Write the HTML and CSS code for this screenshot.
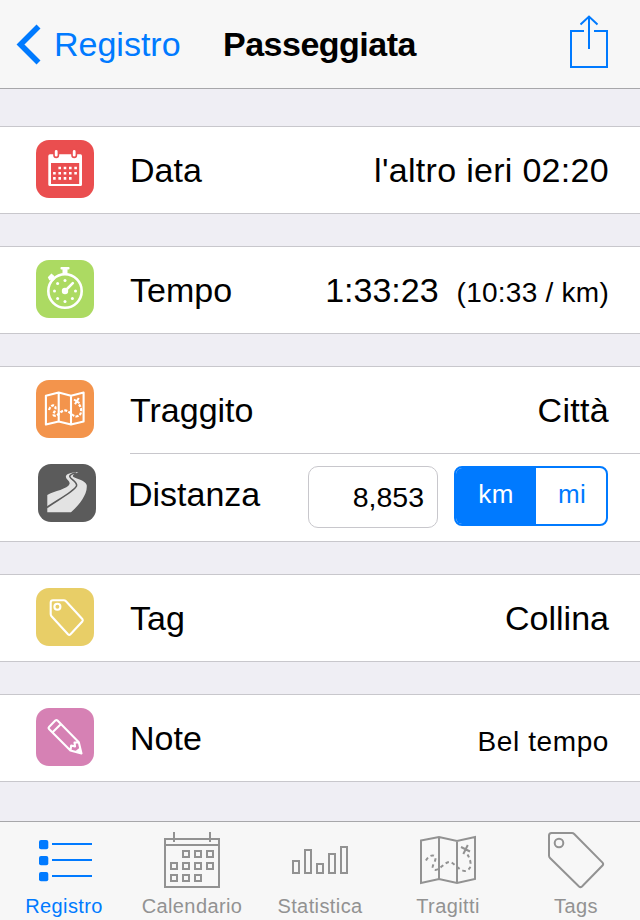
FILE: index.html
```
<!DOCTYPE html>
<html lang="it">
<head>
    <meta charset="UTF-8">
    <meta name="viewport" content="width=device-width, initial-scale=1.0">
    <title>Passeggiata</title>
    <link rel="stylesheet" href="styles.css">
</head>
<body>
    <header class="navbar">
        <a class="back" href="#">
            <svg class="chevron" viewBox="0 0 26 42"><path d="M22.500 3.500 L4.500 21.500 L22.500 39.500"/></svg>
            <span>Registro</span>
        </a>
        <h1>Passeggiata</h1>
        <a class="share" href="#">
            <svg viewBox="0 0 40 54"><path d="M15 16H2V52H38V16H25M20 34V2M11.500 9.500L20 1.500L28.500 9.500"/></svg>
        </a>
    </header>

    <main>
        <section class="group">
            <div class="row">
                <div class="tile red">
                    <svg viewBox="0 0 58 58">
                        <path class="solid" fill-rule="evenodd" d="M14 14.300H44.500Q46 14.300 46 16V44.500Q46 46 44.500 46H14Q12.300 46 12.300 44.500V16Q12.300 14.300 14 14.300ZM15 23V44H43.200V23Z"/>
                        <rect class="ring" x="18" y="9.200" width="4.400" height="8.200" rx="2.200"/>
                        <rect class="ring" x="36" y="9.200" width="4.400" height="8.200" rx="2.200"/>
                        <path class="dots" d="M22.400 28h18.800M17.100 33.200h24M17.100 38.400h18.700"/>
                    </svg>
                </div>
                <span class="label">Data</span>
                <span class="value wide">l'altro ieri 02:20</span>
            </div>
        </section>

        <section class="group">
            <div class="row">
                <div class="tile green">
                    <svg viewBox="0 0 58 58">
                        <circle class="line" cx="29" cy="31" r="16.700"/>
                        <path class="solid" d="M25.300 7h7.400q.8 0 .8.800v1q0 .8-.8.800h-1.200v5h-5v-5h-1.200q-.8 0-.8-.8v-1q0-.8.800-.8z"/>
                        <path class="solid" d="M11.800 17.200l3.600-3.600 3.200 2.700-1 1.500 1.300 1.300-2.300 2.300-1.700-1.700-1.500.7z"/>
                        <path class="hand" d="M29 31L36.800 23.200"/>
                        <circle class="solid" cx="29" cy="31" r="3.200"/>
                        <g class="solid">
                            <circle cx="29" cy="20.500" r="1.500"/>
                            <circle cx="39.500" cy="31" r="1.500"/>
                            <circle cx="29" cy="41.500" r="1.500"/>
                            <circle cx="18.500" cy="31" r="1.500"/>
                            <circle cx="21.600" cy="23.600" r="1.500"/>
                            <circle cx="21.600" cy="38.400" r="1.500"/>
                            <circle cx="36.400" cy="38.400" r="1.500"/>
                        </g>
                    </svg>
                </div>
                <span class="label">Tempo</span>
                <span class="value">1:33:23</span>
                <span class="pace">(10:33 / km)</span>
            </div>
        </section>

        <section class="group">
            <div class="row">
                <div class="tile orange">
                    <svg viewBox="0 0 58 58">
                        <path class="line thin" d="M9.900 15.700L22.700 12.600L35 15.700L47.600 12.600V41.600L35 44.600L22.700 41.600L9.900 44.600ZM22.700 12.600V41.600M35 15.700V44.600"/>
                        <path class="line dashed" d="M13 30C15 24 20 24 19.500 29C19 32 16 34 18 35.500C21 37 24 31 28.500 30.500C33 30 36 36 40 36.500C46 36 46.500 29 43 24.500"/>
                        <path class="line thin" d="M38 19.500L43.500 23.200M42.800 18L39 24.200"/>
                    </svg>
                </div>
                <span class="label">Traggito</span>
                <span class="value wide">Città</span>
            </div>
            <div class="row distance">
                <div class="tile gray">
                    <svg viewBox="0 0 58 58">
                        <path class="asphalt" d="M9.300 31C16 27 30 25 31.500 20C32.500 17 27 15 28 12C29 9.500 34 8.500 40.500 8.300C36 10 33.500 11.500 35.500 13C39 15 47.500 16.500 48.700 21C50 31 39 43 33 48.300H9.300Z"/>
                        <path class="lane" d="M9 43.500C17 37.500 36 27.500 38.500 22C40 17.500 31 15 31.800 12C32.300 10.300 35 9.500 38 9"/>
                    </svg>
                </div>
                <span class="label">Distanza</span>
                <span class="field">8,853</span>
                <div class="segmented">
                    <span class="segment active">km</span>
                    <span class="segment">mi</span>
                </div>
            </div>
        </section>

        <section class="group">
            <div class="row">
                <div class="tile yellow">
                    <svg viewBox="0 0 58 58">
                        <path class="line thin" d="M17 12.300H27.800Q29 12.300 30 13.300L46.300 31Q47.300 32.300 46.300 33.500L34.500 46.300Q33.300 47.500 32 46.300L15.500 28.300Q14.700 27.300 14.700 26V14.600Q14.700 12.300 17 12.300Z"/>
                        <circle class="line thin" cx="21.400" cy="18.700" r="3"/>
                    </svg>
                </div>
                <span class="label">Tag</span>
                <span class="value">Collina</span>
            </div>
        </section>

        <section class="group">
            <div class="row">
                <div class="tile pink">
                    <svg viewBox="0 0 58 58">
                        <path class="line thin" d="M19.300 12.600Q20.500 11.600 21.500 12.600L42.800 34.300L45.500 45.500L34.400 42.500L13 21Q12 20 13 19ZM16.600 24.300L25 16M34.400 42.500L35.200 37.500L39 38.500L38.500 34.500L42.800 34.300"/>
                        <path class="solid" d="M39.500 43L44 39.500L46 46Z"/>
                    </svg>
                </div>
                <span class="label">Note</span>
                <span class="value small">Bel tempo</span>
            </div>
        </section>
    </main>

    <nav class="tabbar">
        <a class="tab active" href="#">
            <svg viewBox="0 0 60 60">
                <g class="bullets">
                    <rect x="5" y="10" width="9.300" height="9.300" rx="2"/>
                    <rect x="5" y="26" width="9.300" height="9.300" rx="2"/>
                    <rect x="5" y="42" width="9.300" height="9.300" rx="2"/>
                </g>
                <path d="M18 14H58M18 30H58M18 46H58"/>
            </svg>
            <span>Registro</span>
        </a>
        <a class="tab" href="#">
            <svg viewBox="0 0 60 60">
                <path d="M3 9H57V57H3ZM3 15H57M12 2V12M48 2V12"/>
                <path d="M21 21h6v6h-6zM33 21h6v6h-6zM45 21h6v6h-6zM9 33h6v6h-6zM21 33h6v6h-6zM33 33h6v6h-6zM45 33h6v6h-6zM9 45h6v6h-6zM21 45h6v6h-6zM33 45h6v6h-6z"/>
            </svg>
            <span>Calendario</span>
        </a>
        <a class="tab" href="#">
            <svg viewBox="0 0 60 60">
                <path d="M3 31h6v12h-6zM15 20h6v23h-6zM27 34h6v9h-6zM39 24h6v19h-6zM51 17h6v26h-6z"/>
            </svg>
            <span>Statistica</span>
        </a>
        <a class="tab" href="#">
            <svg viewBox="0 0 60 60">
                <path d="M3 10.500L21 7L39 11L57 7V49L39 53L21 49L3 53ZM21 7V49M39 11V53"/>
                <path class="trail" d="M8 30.500C10 26 16 23 17.500 28C18 32 12 37 16 39.500C21 42 26 32 31.500 32C36 32 41 41 47 41C54 40 54 32 49.500 24.500"/>
                <path d="M43 17L52 21.500M49.800 15L45.300 24"/>
            </svg>
            <span>Tragitti</span>
        </a>
        <a class="tab" href="#">
            <svg viewBox="0 0 60 60">
                <path d="M5.500 3H26Q27.200 3 28.200 4L56.500 32.600Q57.800 34 56.500 35.500L36 56.500Q34.500 57.700 33 56.500L4 28Q3 27 3 25.500V5.500Q3 3 5.500 3Z"/>
                <circle cx="13" cy="13" r="4.300"/>
            </svg>
            <span>Tags</span>
        </a>
    </nav>
</body>
</html>
```
FILE: styles.css
```
* {
    margin: 0;
    padding: 0;
    box-sizing: border-box;
}

body {
    height: 920px;
    display: flex;
    flex-direction: column;
    background: #efeef4;
    color: #000;
    font-family: 'Liberation Sans', Helvetica, Arial, sans-serif;
    font-size: 34px;
    overflow: hidden;
}

a {
    color: #007aff;
    text-decoration: none;
}

svg {
    display: block;
    fill: none;
}

/* top bar */
.navbar {
    height: 89px;
    display: flex;
    align-items: center;
    padding: 0 31px 0 16px;
    background: #f7f7f7;
    border-bottom: 1px solid #a7a7aa;
}

.back {
    display: flex;
    align-items: center;
    width: 207px;
}

.chevron {
    width: 26px;
    height: 42px;
    margin-right: 12px;
    stroke: #007aff;
    stroke-width: 5.6;
}

.navbar h1 {
    font-size: 34px;
    font-weight: bold;
    letter-spacing: -0.5px;
}

.share {
    margin-left: auto;
    padding-bottom: 4px;
}

.share svg {
    width: 40px;
    height: 54px;
    stroke: #007aff;
    stroke-width: 2;
}

/* grouped list */
main {
    flex: 1;
    display: flex;
    flex-direction: column;
    gap: 32px;
    padding-top: 37px;
}

.group {
    background: #fff;
    border-top: 1px solid #c8c7cc;
    border-bottom: 1px solid #c8c7cc;
}

.row {
    height: 86px;
    display: flex;
    align-items: center;
    padding: 0 31px 0 36px;
}

.label {
    margin-left: 36px;
}

.value {
    margin-left: auto;
}

.wide {
    letter-spacing: 0.3px;
}

.pace {
    margin-left: 18px;
    padding-top: 5px;
    font-size: 28px;
    letter-spacing: 0.25px;
}

.small {
    padding-top: 7px;
    font-size: 28px;
    letter-spacing: 0.6px;
}

.row.distance {
    height: 88px;
    padding: 0 32px 6px 38px;
    background: linear-gradient(#c8c7cc, #c8c7cc) 130px 0 / 510px 1px no-repeat;
}

.distance .label {
    margin-left: 32px;
}

.field {
    width: 130px;
    height: 62px;
    margin: 6px 16px 0 auto;
    padding-right: 13px;
    border: 1px solid #c8c7cc;
    border-radius: 10px;
    font-size: 28.5px;
    line-height: 61px;
    text-align: right;
}

.segmented {
    width: 154px;
    height: 60px;
    margin-top: 4px;
    display: flex;
    border: 2px solid #007aff;
    border-radius: 8px;
    overflow: hidden;
}

.segment {
    flex: 1;
    padding-left: 2px;
    color: #007aff;
    font-size: 26px;
    line-height: 53px;
    letter-spacing: 0.3px;
    text-align: center;
}

.segment.active {
    flex: 0 0 80px;
    padding-left: 0;
    background: #007aff;
    color: #fff;
}

/* row icons */
.tile {
    width: 58px;
    height: 58px;
    margin-bottom: 2px;
    border-radius: 13px;
}

.red { background: #ea4e4f; }
.green { background: #acda62; }
.orange { background: #f3944c; }
.gray { background: #5b5b5b; }
.yellow { background: #e8ce67; }
.pink { background: #d681b4; }

.solid {
    fill: #fff;
}

.line {
    stroke: #fff;
    stroke-width: 2.6;
    stroke-linejoin: round;
}

.thin {
    stroke-width: 2.1;
}

.dashed {
    stroke-dasharray: 3 1.3;
    stroke-width: 2.2;
}

.ring {
    fill: #fff;
    stroke: #ea4e4f;
    stroke-width: 1.6;
}

.dots {
    stroke: #fff;
    stroke-width: 2.6;
    stroke-dasharray: 2.6 2.7;
}

.hand {
    stroke: #fff;
    stroke-width: 2.6;
    stroke-linecap: round;
}

.asphalt {
    fill: #e3e3e3;
}

.lane {
    stroke: #5b5b5b;
    stroke-width: 1.6;
}

/* bottom tabs */
.tabbar {
    height: 99px;
    display: flex;
    background: #f7f7f7;
    border-top: 1px solid #a7a7aa;
}

.tab {
    flex: 1;
    display: flex;
    flex-direction: column;
    align-items: center;
    padding-top: 8px;
    color: #929292;
    font-size: 20px;
    line-height: 32px;
    letter-spacing: 0.4px;
}

.tab svg {
    flex-shrink: 0;
    width: 60px;
    height: 60px;
    stroke: #929292;
    stroke-width: 2;
}

.trail {
    stroke-dasharray: 3.5 3;
}

.tab.active {
    color: #007aff;
}

.tab.active svg {
    stroke: #007aff;
}

.bullets {
    fill: #007aff;
    stroke: none;
}
```
